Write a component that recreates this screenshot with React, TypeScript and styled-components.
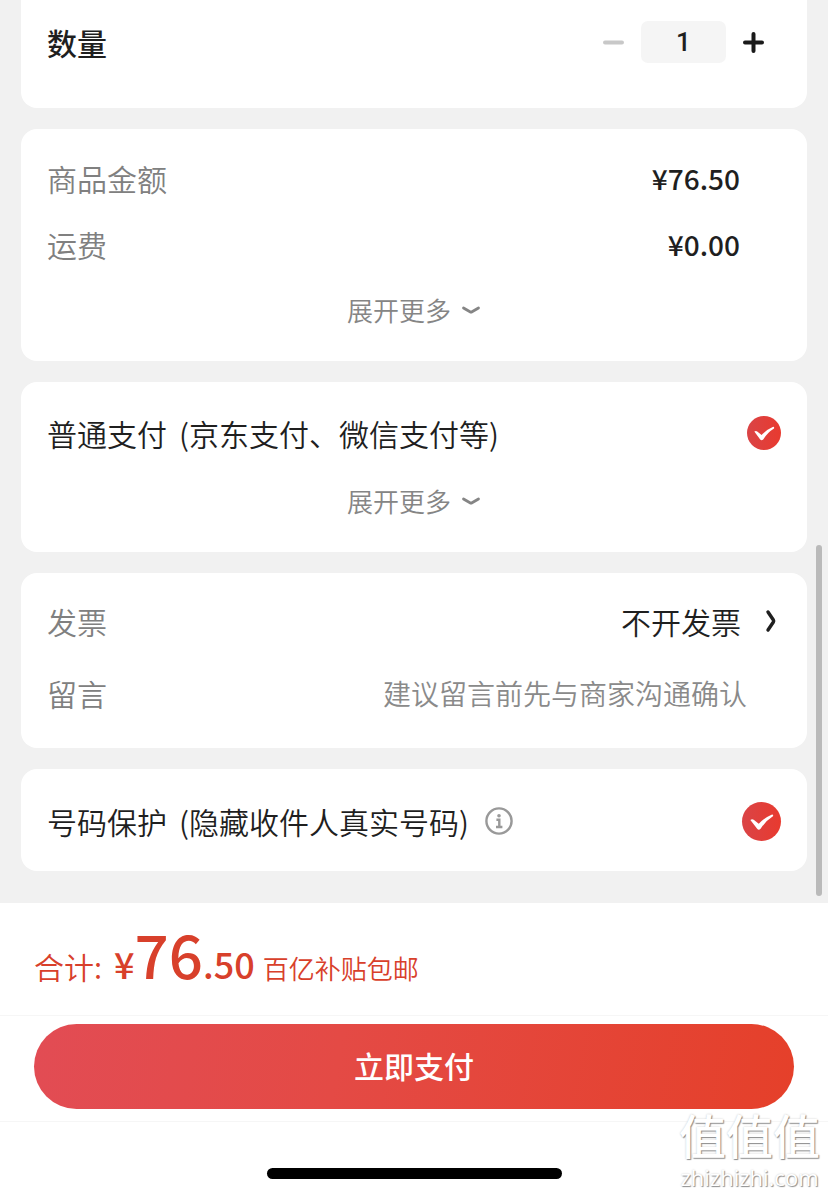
import React, { useState } from "react";
import styled, { createGlobalStyle } from "styled-components";

const GlobalStyle = createGlobalStyle`
  * { box-sizing: border-box; }
  body {
    margin: 0;
    background: #f1f1f1;
    color: #1f1f1f;
    font-family: "Noto Sans CJK SC", sans-serif;
    font-size: 30px;
    line-height: 40px;
  }
  button, input {
    font: inherit;
    color: inherit;
    border: 0;
    padding: 0;
    margin: 0;
    background: none;
  }
  button { cursor: pointer; }
  svg { display: block; }
`;

const Page = styled.div`
  display: flex;
  flex-direction: column;
  min-height: 100vh;
`;

const ScrollArea = styled.main`
  position: relative;
  display: flex;
  flex-direction: column;
  gap: 21px;
  padding: 0 21px 32px;
`;

const ScrollThumb = styled.div`
  position: absolute;
  right: 6px;
  bottom: 7px;
  width: 6px;
  height: 351px;
  border-radius: 3px;
  background: #bababa;
`;

const Card = styled.section<{ $top: number; $bottom: number; $first?: boolean }>`
  padding: ${(p) => p.$top}px 26px ${(p) => p.$bottom}px;
  border-radius: ${(p) => (p.$first ? "0 0 16px 16px" : "16px")};
  background: #fff;
`;

const Row = styled.div<{ $height: number; $inset?: number }>`
  display: flex;
  align-items: center;
  justify-content: space-between;
  min-height: ${(p) => p.$height}px;
  padding-right: ${(p) => p.$inset ?? 0}px;
`;

const Heading = styled.label`
  font-weight: 500;
`;

const Muted = styled.span`
  color: #808080;
  font-weight: 350;
`;

const Price = styled.span`
  font-size: 28px;
  font-weight: 500;
`;

const Stepper = styled.div`
  display: flex;
  align-items: center;
  gap: 17px;
`;

const StepButton = styled.button`
  width: 21px;
  height: 42px;
  color: #1a1a1a;
  &:disabled { color: #c8c8c8; cursor: default; }
  svg { margin: 0 auto; }
`;

const QuantityInput = styled.input`
  width: 85px;
  height: 42px;
  border-radius: 7px;
  background: #f5f5f5;
  text-align: center;
  font-family: Roboto, sans-serif;
  font-size: 26px;
  font-weight: 500;
`;

const MoreRow = styled.div<{ $height: number }>`
  display: flex;
  align-items: center;
  justify-content: center;
  min-height: ${(p) => p.$height}px;
`;

const MoreButton = styled.button`
  display: flex;
  align-items: center;
  gap: 10px;
  color: #858585;
  font-size: 26px;
  font-weight: 350;
`;

const OptionName = styled.div`
  display: flex;
  align-items: center;
  gap: 16px;
`;

const OptionLabel = styled.label`
  display: flex;
  gap: 12px;
  font-weight: 350;
`;

const InvoiceButton = styled.button`
  display: flex;
  align-items: center;
  gap: 24px;
  font-weight: 350;
`;

const MessageInput = styled.input`
  flex: 1;
  min-width: 0;
  outline: 0;
  font-size: 28px;
  font-weight: 350;
  text-align: right;
  &::placeholder { color: #8a8a8a; opacity: 1; }
`;

const Tick = styled.span<{ $size: number }>`
  position: relative;
  width: ${(p) => p.$size}px;
  height: ${(p) => p.$size}px;
  input {
    display: block;
    appearance: none;
    width: 100%;
    height: 100%;
    border-radius: 50%;
    border: 2px solid #c8c8c8;
    cursor: pointer;
  }
  input:checked {
    border: 0;
    background: linear-gradient(90deg, #da4446, #e83a2f);
  }
  svg {
    position: absolute;
    inset: 0;
    width: 100%;
    height: 100%;
    pointer-events: none;
  }
`;

const Footer = styled.footer`
  position: relative;
  flex: 1;
  display: flex;
  flex-direction: column;
  background: #fff;
`;

const Total = styled.div`
  display: flex;
  align-items: baseline;
  height: 113px;
  padding: 10px 34px 0;
  border-bottom: 1px solid #f6f6f6;
  color: #d8402b;
`;

const TotalLabel = styled.span`
  font-weight: 350;
`;

const Amount = styled.strong`
  margin: 0 8px 0 12px;
  font-size: 36px;
  font-weight: 500;
  line-height: 80px;
  b {
    font-size: 60px;
    font-weight: 500;
  }
`;

const Perk = styled.span`
  font-size: 26px;
  font-weight: 350;
`;

const PayBar = styled.div`
  padding: 8px 34px 12px;
  border-bottom: 1px solid #f6f6f6;
`;

const PayButton = styled.button`
  display: block;
  width: 100%;
  height: 85px;
  padding-bottom: 3px;
  border-radius: 43px;
  background: linear-gradient(100deg, #e24c54, #e44a45 40%, #e5402a);
  color: #fff;
  font-weight: 500;
`;

const HomeIndicator = styled.div`
  width: 295px;
  height: 11px;
  margin: 46px auto 16px;
  border-radius: 6px;
  background: #000;
`;

const Watermark = styled.div`
  position: absolute;
  right: 8px;
  bottom: 4px;
  display: flex;
  flex-direction: column;
  align-items: center;
  color: #fff;
  text-shadow: 1px 1px 1px #8c8c8c, 0 0 2px #c8c8c8;
  pointer-events: none;
  strong {
    font-family: "Liberation Sans", "Noto Sans CJK SC", sans-serif;
    font-size: 47px;
    font-weight: 500;
    line-height: 50px;
  }
  span {
    font-family: "Open Sans", sans-serif;
    font-size: 22px;
    line-height: 28px;
  }
`;

const ExpandMore = () => (
  <MoreButton type="button">
    展开更多
    <svg width="20" height="10" viewBox="0 0 20 10" fill="none" stroke="currentColor" strokeWidth="2.8" strokeLinecap="round" strokeLinejoin="round">
      <path d="M2.5 3 L9 6.8 Q10 7.4 11 6.8 L17.5 3" />
    </svg>
  </MoreButton>
);

const TickBox = ({ id, size }: { id: string; size: number }) => {
  const [on, setOn] = useState(true);
  return (
    <Tick $size={size}>
      <input id={id} type="checkbox" checked={on} onChange={(e) => setOn(e.target.checked)} />
      {on && (
        <svg viewBox="0 0 34 34" fill="#fff">
          <path d="M7.3 15.6 Q8.8 14.4 10.2 15.4 L14.6 19 Q19.5 13.5 26.2 10.8 Q27.6 10.9 27 12.4 Q20.5 16.4 16.2 23.4 Q14.6 25 13.2 23.4 Z" />
        </svg>
      )}
    </Tick>
  );
};

export default function App() {
  const [count, setCount] = useState(1);

  return (
    <>
      <GlobalStyle />
      <Page>
        <ScrollArea>
          <Card $top={21} $bottom={45} $first>
            <Row $height={42} $inset={17}>
              <Heading htmlFor="quantity">数量</Heading>
              <Stepper>
                <StepButton type="button" aria-label="减少" disabled={count <= 1} onClick={() => setCount(count - 1)}>
                  <svg width="21" height="21" viewBox="0 0 21 21" stroke="currentColor" strokeWidth="4" strokeLinecap="round">
                    <path d="M2 10.5 H19" />
                  </svg>
                </StepButton>
                <QuantityInput
                  id="quantity"
                  inputMode="numeric"
                  value={count}
                  onChange={(e) => setCount(Math.max(1, Number(e.target.value) || 1))}
                />
                <StepButton type="button" aria-label="增加" onClick={() => setCount(count + 1)}>
                  <svg width="21" height="21" viewBox="0 0 21 21" stroke="currentColor" strokeWidth="4" strokeLinecap="round">
                    <path d="M2 10.5 H19 M10.5 2 V19" />
                  </svg>
                </StepButton>
              </Stepper>
            </Row>
          </Card>

          <Card $top={16} $bottom={18}>
            <Row $height={66} $inset={41}>
              <Muted>商品金额</Muted>
              <Price>¥76.50</Price>
            </Row>
            <Row $height={66} $inset={41}>
              <Muted>运费</Muted>
              <Price>¥0.00</Price>
            </Row>
            <MoreRow $height={66}>
              <ExpandMore />
            </MoreRow>
          </Card>

          <Card $top={17} $bottom={17}>
            <Row $height={68}>
              <OptionLabel htmlFor="payment">
                <span>普通支付</span>
                <span>(京东支付、微信支付等)</span>
              </OptionLabel>
              <TickBox id="payment" size={34} />
            </Row>
            <MoreRow $height={68}>
              <ExpandMore />
            </MoreRow>
          </Card>

          <Card $top={12} $bottom={19}>
            <Row $height={72} $inset={4}>
              <Muted>发票</Muted>
              <InvoiceButton type="button">
                不开发票
                <svg width="12" height="24" viewBox="0 0 12 24" fill="none" stroke="currentColor" strokeWidth="3.4" strokeLinecap="round" strokeLinejoin="round">
                  <path d="M3 3 L8.4 11 Q9 12 8.4 13 L3 21" />
                </svg>
              </InvoiceButton>
            </Row>
            <Row $height={72} $inset={34}>
              <Muted as="label" htmlFor="message">留言</Muted>
              <MessageInput id="message" placeholder="建议留言前先与商家沟通确认" />
            </Row>
          </Card>

          <Card $top={16} $bottom={14}>
            <Row $height={72}>
              <OptionName>
                <OptionLabel htmlFor="privacy">
                  <span>号码保护</span>
                  <span>(隐藏收件人真实号码)</span>
                </OptionLabel>
                <button type="button" aria-label="说明">
                  <svg width="28" height="28" viewBox="0 0 28 28" fill="none" stroke="#999" strokeWidth="2.4">
                    <circle cx="14" cy="14" r="12.6" />
                    <circle cx="14" cy="8.8" r="1.8" fill="#999" stroke="none" />
                    <path d="M11.4 12.8 H14.3 V20 M11 20 H17.4" />
                  </svg>
                </button>
              </OptionName>
              <TickBox id="privacy" size={39} />
            </Row>
          </Card>
          <ScrollThumb />
        </ScrollArea>

        <Footer>
          <Total>
            <TotalLabel>合计:</TotalLabel>
            <Amount>
              ¥<b>76</b>.50
            </Amount>
            <Perk>百亿补贴包邮</Perk>
          </Total>
          <PayBar>
            <PayButton type="button">立即支付</PayButton>
          </PayBar>
          <HomeIndicator />
          <Watermark>
            <strong>值值值</strong>
            <span>zhizhizhi.com</span>
          </Watermark>
        </Footer>
      </Page>
    </>
  );
}
